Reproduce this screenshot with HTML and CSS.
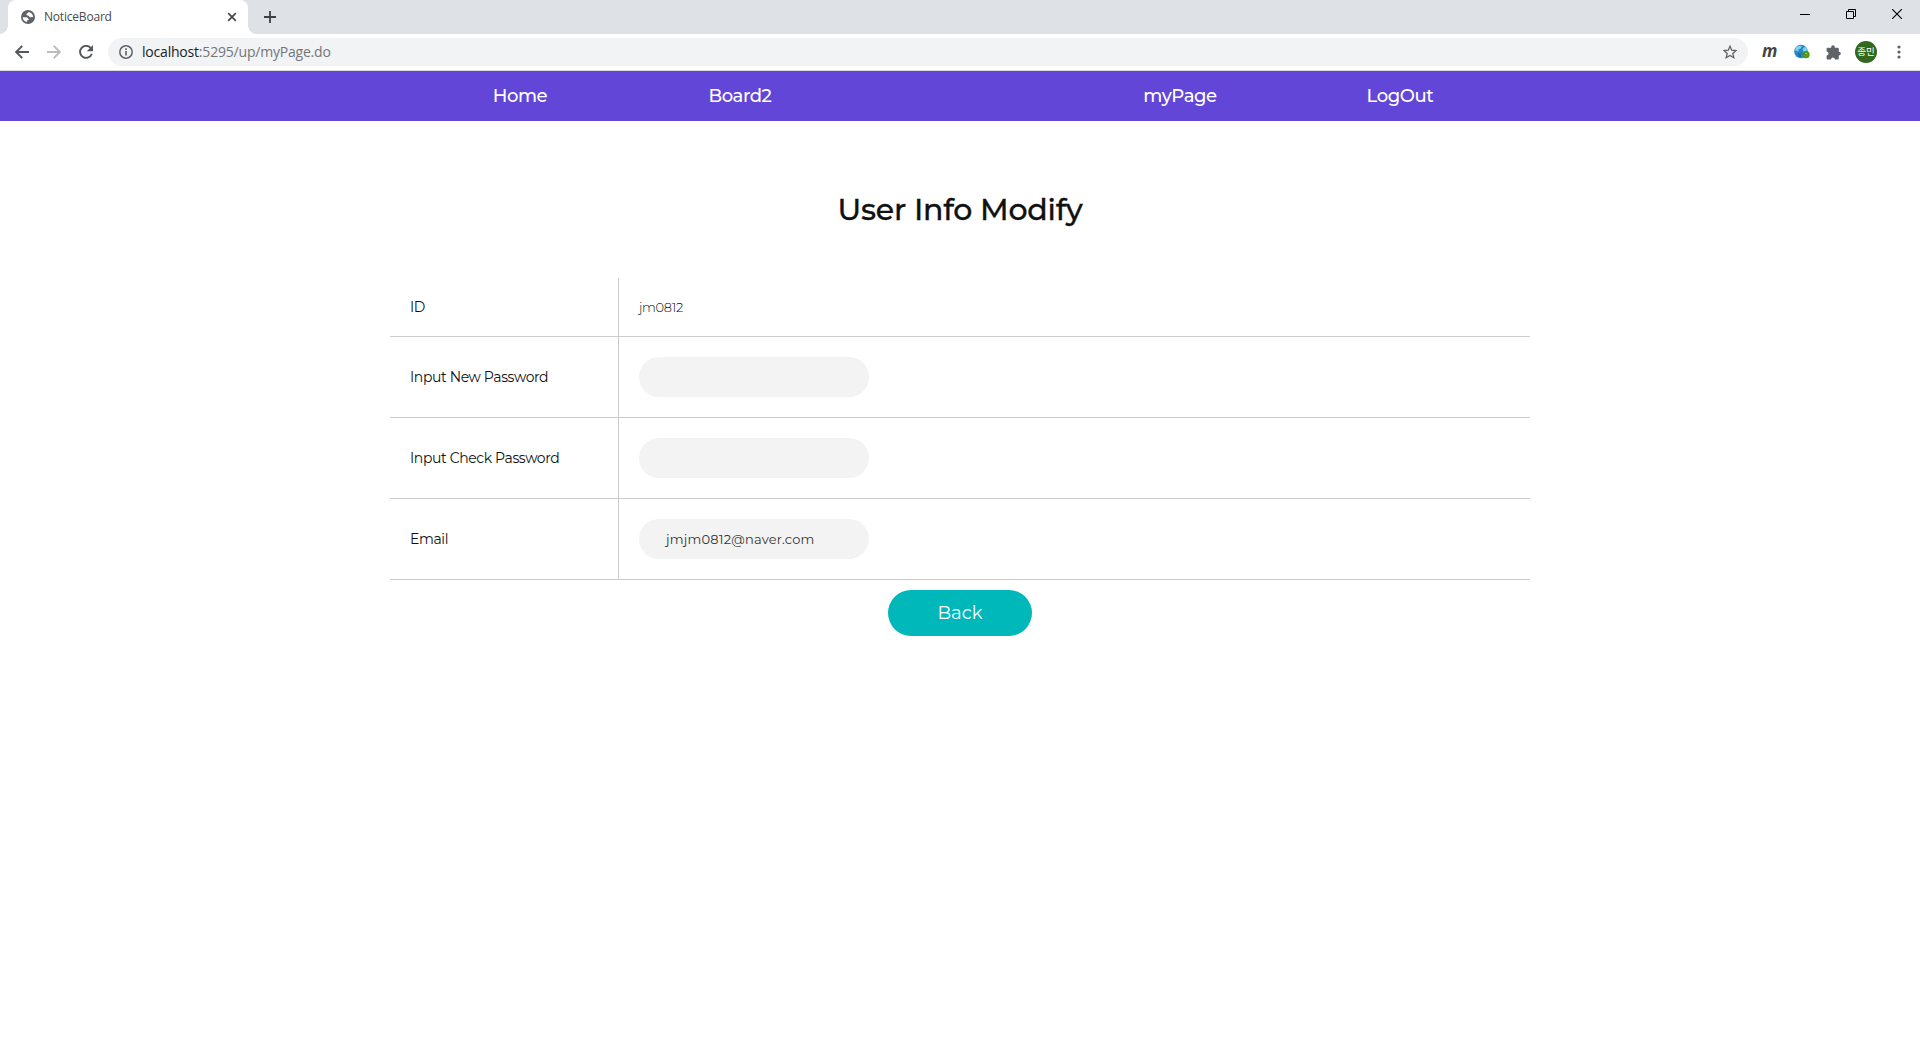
FILE: index.html
```html
<!DOCTYPE html>
<html lang="ko">
<head>
<meta charset="utf-8">
<title>NoticeBoard</title>
<link rel="stylesheet" href="styles.css">
</head>
<body>
<header class="browser">
  <div class="tabstrip">
    <div class="tab">
      <svg class="globe" width="14" height="14" viewBox="0 0 14 14"><circle cx="7" cy="7" r="7" fill="#5f6368"/><path d="M1.700 7.300h3.800c1.200 0 1.200 1.500 2.200 1.600v1.200H6.200v2C3.600 11.900 1.700 9.700 1.700 7.300z" fill="#fff"/><path d="M7.300 2.200c-.7 1.500-2.100 1.300-1.900 2.500.2 1 2.400.3 2.700 1.500.3 1 1.700 1.300 2.600.700l1.500.2c0-2.700-2.200-5-4.900-4.900z" fill="#fff"/></svg>
      <span class="tab-title">NoticeBoard</span>
      <svg class="tab-close" width="10" height="10" viewBox="0 0 10 10"><path d="M1.200 1.200l7.600 7.600M8.800 1.200L1.200 8.800" stroke="#45494d" stroke-width="1.700"/></svg>
    </div>
    <svg class="new-tab" width="12" height="12" viewBox="0 0 12 12"><path d="M6 0v12M0 6h12" stroke="#3c4043" stroke-width="1.800"/></svg>
    <div class="window-buttons">
      <svg width="10" height="10" viewBox="0 0 10 10"><path d="M0 5.500h10" stroke="#000"/></svg>
      <svg width="10" height="10" viewBox="0 0 10 10"><path d="M.5 2.500h7v7h-7zM2.500 2.500v-2h7v7h-2" fill="none" stroke="#000"/></svg>
      <svg width="10" height="10" viewBox="0 0 10 10"><path d="M0 0l10 10M10 0L0 10" stroke="#000" stroke-width="1.100"/></svg>
    </div>
  </div>
  <div class="toolbar">
    <svg class="back-arrow" width="14" height="14" viewBox="0 0 14 14"><path d="M14 7H1.500M7.300 .8L1.200 7l6.100 6.200" fill="none" stroke="#54585c" stroke-width="1.900"/></svg>
    <svg class="forward-arrow" width="14" height="14" viewBox="0 0 14 14"><path d="M0 7h12.500M6.700 .8L12.800 7l-6.100 6.200" fill="none" stroke="#babcbe" stroke-width="1.900"/></svg>
    <svg class="reload" width="14" height="14" viewBox="0 0 14 14"><path d="M11.700 3A6 6 0 1 0 12.800 8.700" fill="none" stroke="#54585c" stroke-width="1.900"/><path d="M14 0v6.200H7.800z" fill="#54585c"/></svg>
    <div class="omnibox">
      <svg width="14" height="14" viewBox="0 0 14 14"><circle cx="7" cy="7" r="6.200" fill="none" stroke="#5f6368" stroke-width="1.500"/><path d="M7 6v4.500M7 3.300v1.600" stroke="#5f6368" stroke-width="1.600"/></svg>
      <span class="url"><b>localhost</b>:5295/up/myPage.do</span>
      <svg class="star" width="14" height="14" viewBox="0 0 14 14"><path d="M7 1.200l1.700 4 4.300.4-3.200 2.900 1 4.200L7 10.500l-3.800 2.200 1-4.200L1 5.600l4.300-.4z" fill="none" stroke="#5f6368" stroke-width="1.300"/></svg>
    </div>
    <span class="ext-m">m</span>
    <svg class="ext-globe" width="16" height="16" viewBox="0 0 16 16"><circle cx="7" cy="7.500" r="6.800" fill="#2488c7"/><path d="M2 3.200l3-1.500 3 .3-1.300 2.400-2 .8-.5 2.600L1 6zM8.500 5l2.500-2.500 2 2.300-.5 3-2.700.5z" fill="#83cfee"/><path d="M4 9l3 .5v3.700l-2-.4z" fill="#166ba8"/><circle cx="12" cy="10.700" r="2.600" fill="#c8df80" stroke="#4a9610" stroke-width="2"/><path d="M9.500 9.300l2.500 2 1.500-1" fill="none" stroke="#487d16" stroke-width="1.400"/></svg>
    <svg class="puzzle" width="15" height="15" viewBox="0 0 15 15"><path d="M1.900 2.800h3.300V2a1.800 1.800 0 0 1 3.600 0v.8h2.700c.8 0 1.300.5 1.300 1.300v2.700h.2a1.800 1.800 0 0 1 0 3.600h-.2v2.800c0 .8-.5 1.300-1.300 1.300H8.900v-.4a2 2 0 0 0-3.900 0v.4H1.900c-.8 0-1.300-.5-1.300-1.300v-2.700H1a2 2 0 0 0 0-3.900H.6V4.100c0-.8.5-1.300 1.300-1.300z" fill="#5f6368"/></svg>
    <span class="avatar">종민</span>
    <svg class="menu-dots" width="4" height="14" viewBox="0 0 4 14"><g fill="#5f6368"><circle cx="2" cy="2" r="1.600"/><circle cx="2" cy="7" r="1.600"/><circle cx="2" cy="12" r="1.600"/></g></svg>
  </div>
</header>
<nav class="nav">
  <a>Home</a><a>Board2</a><span></span><a>myPage</a><a>LogOut</a>
</nav>
<main class="page">
  <h1>User Info Modify</h1>
  <div class="form">
    <div class="row row-id"><div class="label">ID</div><div class="value"><span class="user-id">jm0812</span></div></div>
    <div class="row"><div class="label">Input New Password</div><div class="value"><div class="field"></div></div></div>
    <div class="row"><div class="label">Input Check Password</div><div class="value"><div class="field"></div></div></div>
    <div class="row"><div class="label">Email</div><div class="value"><div class="field">jmjm0812@naver.com</div></div></div>
  </div>
  <a class="button">Back</a>
</main>
</body>
</html>
```
FILE: styles.css
```css
* { box-sizing: border-box; }
body { margin: 0; background: #fff; font-family: Montserrat, Inter, sans-serif; color: #111; }
svg { display: block; flex: none; }
.tabstrip { height: 34px; background: #dee1e6; display: flex; padding-left: 8px; }
.tab { position: relative; width: 240px; height: 34px; background: #fff; border-radius: 8px 8px 0 0; display: flex; align-items: center; padding: 0 11px 0 13px; }
.tab::before, .tab::after { content: ""; position: absolute; bottom: 0; width: 8px; height: 8px; }
.tab::before { left: -8px; background: radial-gradient(circle at 0 0, #dee1e6 7.500px, #fff 8px); }
.tab::after { right: -8px; background: radial-gradient(circle at 100% 0, #dee1e6 7.500px, #fff 8px); }
.tab-title { font: 12px/16px "Open Sans", sans-serif; letter-spacing: -0.2px; color: #45494d; margin-left: 9px; }
.tab-close { margin-left: auto; }
.new-tab { margin: 11px 0 0 16px; }
.window-buttons { margin-left: auto; display: flex; gap: 36px; padding: 9px 18px 0 0; }
.toolbar { height: 37px; border-bottom: 1px solid #d9dbdf; display: flex; align-items: center; padding: 0 19px 0 15px; }
.forward-arrow { margin-left: 18px; }
.reload { margin-left: 18px; }
.omnibox { width: 1640px; height: 28px; margin-left: 15px; border-radius: 14px; background: #f1f3f4; display: flex; align-items: center; padding: 0 11px; }
.url { font: 14px/20px "Open Sans", sans-serif; letter-spacing: -0.2px; color: #72767a; margin-left: 9px; }
.url b { font-weight: 400; color: #202124; }
.star { margin-left: auto; }
.ext-m { font: italic 700 17px/20px "Open Sans", sans-serif; color: #444; width: 16px; margin: -3px 0 0 14px; }
.ext-globe { margin-left: 16px; }
.puzzle { margin-left: 16px; }
.avatar { width: 22px; height: 22px; margin-left: 14px; border-radius: 50%; background: #33691e; color: #fff; font: 9.500px/21px "Noto Sans CJK KR", sans-serif; text-align: center; white-space: nowrap; }
.menu-dots { margin-left: 20px; }
.nav { height: 50px; background: #6246d8; display: grid; grid-template-columns: repeat(5, 220px); justify-content: center; text-align: center; color: #fff; font-size: 18px; letter-spacing: -0.4px; font-weight: 500; line-height: 51px; }
.page { display: flex; flex-direction: column; align-items: center; }
h1 { margin: 70px 0 49px; font-size: 30px; line-height: 38px; font-weight: 500; letter-spacing: -0.220px; -webkit-text-stroke: 0.3px #111; }
.form { width: 1140px; }
.row { display: grid; grid-template-columns: 229px 1fr; height: 81px; border-bottom: 1px solid #ccc; font-size: 14px; }
.row-id { height: 59px; }
.label { border-right: 1px solid #ccc; display: flex; align-items: center; padding-left: 20px; letter-spacing: -0.38px; }
.value { display: flex; align-items: center; padding-left: 20px; font-size: 13px; color: #333; }
.user-id { font-weight: 300; letter-spacing: -0.35px; color: #111; }
.field { width: 230px; height: 40px; border-radius: 20px; background: #f3f3f3; display: flex; align-items: center; padding-left: 27px; letter-spacing: 0.2px; }
.button { width: 144px; height: 46px; margin-top: 10px; border-radius: 23px; background: #00b7b9; color: #fff; font-size: 18px; line-height: 46px; text-align: center; }
```
